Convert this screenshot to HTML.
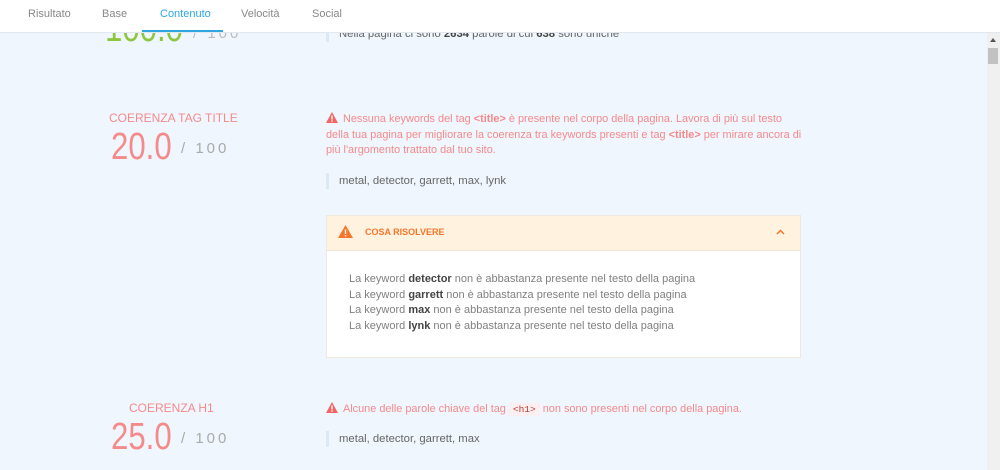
<!DOCTYPE html>
<html><head><meta charset="utf-8"><style>
body{margin:0;width:1000px;height:470px;overflow:hidden;background:#eff6fd;font-family:"Liberation Sans",sans-serif;position:relative}
.a{position:absolute;white-space:nowrap}
.hdr{position:absolute;left:0;top:0;width:1000px;height:32px;background:#fff;border-bottom:1px solid #e3e8ee}
.tab{position:absolute;top:8px;font-size:11px;color:#888}
.big{font-size:38px;font-weight:300;transform:scaleX(0.82);transform-origin:0 0;color:#f58a8a}
.of{position:absolute;font-size:15px;color:#aaa;letter-spacing:3px;white-space:nowrap}
.red{color:#f58a8a}
.warn{font-size:10.9px;color:#f58a8a;line-height:15.5px}
.kw{font-size:11.3px;color:#666;border-left:3px solid #dde8f5;padding-left:10px;height:16px;line-height:16px}
.bl b{color:#444;font-weight:600}
.bl{font-size:11px;color:#808080;line-height:15.5px}
.code{background:#fbeff1;color:#c0392b;font-family:"Liberation Mono",monospace;font-size:9.5px;padding:1px 4px}
</style></head><body>
<div class="a big" style="left:105px;top:8px;color:#8dc63f">100.0</div>
<div class="of" style="left:193px;top:25px;color:#bbb">/ 100</div>
<div class="kw a" style="left:326px;top:26px">Nella pagina ci sono <b style="color:#444">2634</b> parole di cui <b style="color:#444">638</b> sono uniche</div>
<div class="hdr"></div>
<div class="tab" style="left:28px">Risultato</div>
<div class="tab" style="left:102px">Base</div>
<div class="tab" style="left:160px;color:#2ea7e0">Contenuto</div>
<div class="tab" style="left:241px">Velocità</div>
<div class="tab" style="left:312px">Social</div>
<div class="a" style="left:142px;top:30px;width:81px;height:2px;background:#2ea7e0"></div>
<div class="a" style="left:987px;top:33px;width:13px;height:437px;background:#f0f0f0"></div>
<div class="a" style="left:988px;top:48px;width:10px;height:16px;background:#c1c1c1"></div>
<div class="a" style="left:990px;top:38px;width:0;height:0;border-left:3px solid transparent;border-right:3px solid transparent;border-bottom:4px solid #555"></div>

<div class="a red" style="left:109px;top:111px;font-size:12px">COERENZA TAG TITLE</div>
<div class="a big" style="left:111px;top:126px">20.0</div>
<div class="of" style="left:181px;top:140px">/ 100</div>
<div class="a warn" style="left:326px;top:112px;width:480px;white-space:normal"><svg width="12" height="11" viewBox="0 0 12 11" style="margin-right:5px;vertical-align:-1px"><path d="M6 0L12 11H0Z" fill="#f26565"/><rect x="5.3" y="3.5" width="1.4" height="4" fill="#fff"/><rect x="5.3" y="8.3" width="1.4" height="1.3" fill="#fff"/></svg>Nessuna keywords del tag <b>&lt;title&gt;</b> è presente nel corpo della pagina. Lavora di più sul testo della tua pagina per migliorare la coerenza tra keywords presenti e tag <b>&lt;title&gt;</b> per mirare ancora di più l'argomento trattato dal tuo sito.</div>
<div class="a kw" style="left:326px;top:173px">metal, detector, garrett, max, lynk</div>

<div class="a" style="left:326px;top:215px;width:473px;height:141px;background:#fff;border:1px solid #eee8dd"></div>
<div class="a" style="left:327px;top:216px;width:473px;height:34px;background:#fff2df;border-bottom:1px solid #f1e6d6"></div>
<svg class="a" style="left:338px;top:225px" width="15" height="13" viewBox="0 0 15 13"><path d="M7.5 0L15 13H0Z" fill="#f7762a"/><rect x="6.8" y="4.5" width="1.4" height="4.5" fill="#fff"/><rect x="6.8" y="10" width="1.4" height="1.4" fill="#fff"/></svg>
<div class="a" style="left:365px;top:227px;font-size:9px;font-weight:bold;color:#f7762a">COSA RISOLVERE</div>
<svg class="a" style="left:776px;top:229px" width="9" height="6"><path d="M1 5L4.5 1.5L8 5" stroke="#f7762a" stroke-width="1.5" fill="none"/></svg>
<div class="a bl" style="left:349px;top:272px">La keyword <b>detector</b> non è abbastanza presente nel testo della pagina<br>La keyword <b>garrett</b> non è abbastanza presente nel testo della pagina<br>La keyword <b>max</b> non è abbastanza presente nel testo della pagina<br>La keyword <b>lynk</b> non è abbastanza presente nel testo della pagina</div>

<div class="a red" style="left:129px;top:401px;font-size:12px">COERENZA H1</div>
<div class="a big" style="left:111px;top:416px">25.0</div>
<div class="of" style="left:181px;top:430px">/ 100</div>
<div class="a warn" style="left:326px;top:402px"><svg width="12" height="11" viewBox="0 0 12 11" style="margin-right:5px;vertical-align:-1px"><path d="M6 0L12 11H0Z" fill="#f26565"/><rect x="5.3" y="3.5" width="1.4" height="4" fill="#fff"/><rect x="5.3" y="8.3" width="1.4" height="1.3" fill="#fff"/></svg>Alcune delle parole chiave del tag <span class="code">&lt;h1&gt;</span> non sono presenti nel corpo della pagina.</div>
<div class="a kw" style="left:326px;top:431px">metal, detector, garrett, max</div>
</body></html>
